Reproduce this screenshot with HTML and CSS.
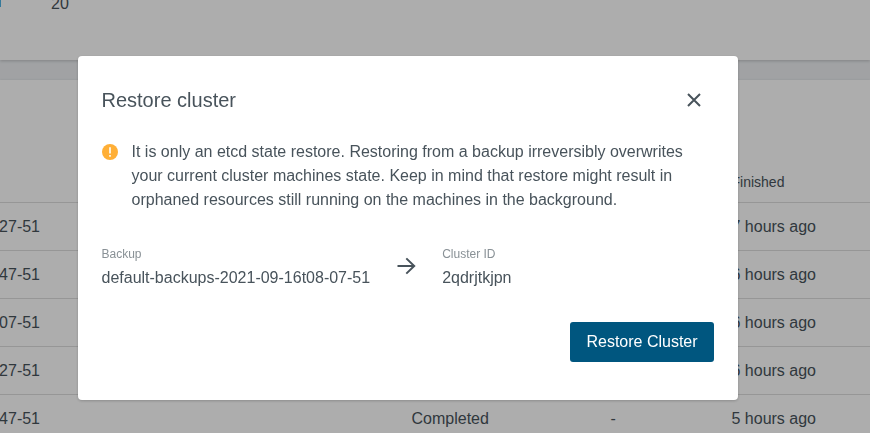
FILE: index.html
```html
<!DOCTYPE html>
<html lang="en">
<head>
<meta charset="utf-8">
<title>Restore cluster</title>
<link rel="stylesheet" href="styles.css">
</head>
<body>
<main class="page">
  <section class="card summary"><span class="marker"></span><span class="count">20</span></section>
  <section class="card backups">
    <div class="row head"><span></span><span></span><span></span><span>Finished</span></div>
    <div class="row"><span class="name">27-51</span><span></span><span></span><span>7 hours ago</span></div>
    <div class="row"><span class="name">47-51</span><span></span><span></span><span>6 hours ago</span></div>
    <div class="row"><span class="name">07-51</span><span></span><span></span><span>6 hours ago</span></div>
    <div class="row"><span class="name">27-51</span><span></span><span></span><span>6 hours ago</span></div>
    <div class="row"><span class="name">47-51</span><span>Completed</span><span>-</span><span>5 hours ago</span></div>
  </section>
</main>
<div class="backdrop">
  <div class="dialog" role="dialog" aria-labelledby="title">
    <header class="dialog-header">
      <h1 id="title">Restore cluster</h1>
      <button class="close" aria-label="Close"><svg width="24" height="24" viewBox="0 0 24 24"><path d="M6 6l12 12M18 6L6 18"/></svg></button>
    </header>
    <div class="notice">
      <svg class="warning" width="16" height="16" viewBox="0 0 16 16"><circle cx="8" cy="8" r="8"/><path d="M8 3.2v6.2M8 11v1.8"/></svg>
      <p>It is only an etcd state restore. Restoring from a backup irreversibly overwrites your current cluster machines state. Keep in mind that restore might result in orphaned resources still running on the machines in the background.</p>
    </div>
    <div class="transfer">
      <dl><dt>Backup</dt><dd>default-backups-2021-09-16t08-07-51</dd></dl>
      <svg class="arrow" width="24" height="24" viewBox="0 0 24 24"><path d="M3.5 12h17M12.3 4.4l7.9 7.6-7.9 7.6"/></svg>
      <dl><dt>Cluster ID</dt><dd>2qdrjtkjpn</dd></dl>
    </div>
    <footer><button class="submit">Restore Cluster</button></footer>
  </div>
</div>
</body>
</html>
```
FILE: styles.css
```css
* { box-sizing: border-box; }
body {
  margin: 0;
  height: 433px;
  overflow: hidden;
  background: #edeff2;
  color: #48535b;
  font: 16px/24px "Liberation Sans", Arial, sans-serif;
}
.page {
  display: flex;
  flex-direction: column;
  gap: 20px;
  height: 433px;
  overflow: hidden;
}
.card {
  flex: none;
  background: #fff;
  box-shadow: 0 1px 3px rgba(0, 0, 0, .2);
}
.summary { display: flex; height: 60px; }
.marker { width: 1px; height: 7px; margin-right: 50px; background: #4fb3e3; }
.count { margin-top: -8px; }
.backups { padding-top: 81px; }
.row {
  display: grid;
  grid-template-columns: 411.5px 199px 121px 138px;
  align-items: center;
  height: 48px;
  padding-top: 1px;
  border-bottom: 1px solid #dedede;
}
.row.head { height: 42px; font-size: 14px; }
.name {
  display: flex;
  justify-content: flex-end;
  width: 40px;
  white-space: nowrap;
}
.backdrop {
  position: fixed;
  inset: 0;
  display: flex;
  justify-content: center;
  align-items: flex-start;
  padding: 56px 54px 0 0;
  background: rgba(0, 0, 0, .32);
}
.dialog {
  width: 660px;
  height: 344px;
  padding: 24px 24px 0 23.5px;
  border-radius: 4px;
  background: #fff;
  box-shadow: 0 1px 3px rgba(0, 0, 0, .2);
}
.dialog-header {
  display: flex;
  justify-content: space-between;
  align-items: center;
  height: 40px;
}
h1 { margin: 0; font-size: 20px; font-weight: 400; }
button { border: 0; font: inherit; }
.close {
  display: grid;
  place-items: center;
  width: 40px;
  height: 40px;
  padding: 0;
  background: none;
}
.close path, .arrow path { fill: none; stroke: #48535b; stroke-width: 2; }
.notice { display: flex; gap: 14px; margin-top: 20px; }
.warning { flex: none; margin-top: 4px; }
.warning circle { fill: #ffaf36; }
.warning path { stroke: #fff; stroke-width: 1.6; }
.notice p { width: 564px; margin: 0; }
.transfer { display: flex; align-items: center; margin-top: 30px; }
dl, dd { margin: 0; }
dt { font-size: 12px; color: #899196; }
.arrow { margin: 0 24px; }
footer { display: flex; justify-content: flex-end; margin-top: 32px; }
.submit {
  width: 144px;
  height: 40px;
  padding: 0;
  border-radius: 3px;
  background: #00567f;
  color: #fff;
}
```
